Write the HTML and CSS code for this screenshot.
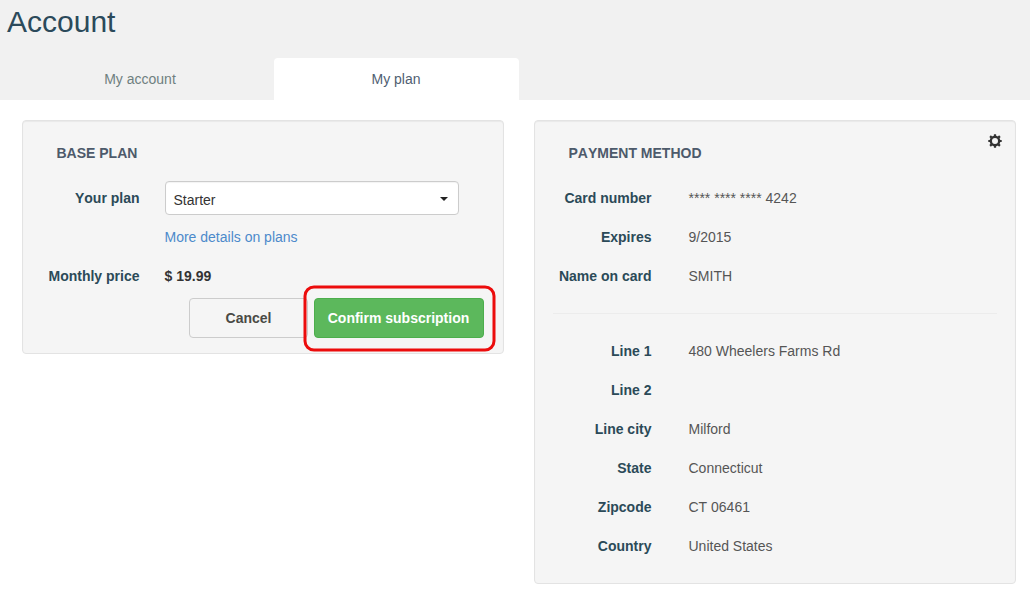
FILE: index.html
```html
<!DOCTYPE html>
<html lang="en">
<head>
<meta charset="utf-8">
<title>Account</title>
<link rel="stylesheet" href="styles.css">
</head>
<body>
<header class="header">
  <h1 class="title">Account</h1>
  <nav class="tabs">
    <a class="tab">My account</a>
    <a class="tab active">My plan</a>
  </nav>
</header>
<main class="content">
  <section class="panel plan">
    <h2 class="heading">BASE PLAN</h2>
    <div class="row"><span class="label">Your plan</span>
      <div class="select"><span>Starter</span><i class="caret"></i></div></div>
    <div class="row"><span class="label"></span><a class="link">More details on plans</a></div>
    <div class="row"><span class="label">Monthly price</span><b class="price">$ 19.99</b></div>
    <div class="actions">
      <button class="btn cancel">Cancel</button>
      <div class="confirm-wrap"><button class="btn confirm">Confirm subscription</button>
        <svg class="highlight" viewBox="0 0 193 67"><rect x="2" y="2" width="189" height="63" rx="9" fill="none" stroke="#ec0c0c" stroke-width="3"/></svg></div>
    </div>
  </section>
  <section class="panel payment">
    <svg class="gear" viewBox="-7 -7 14 14"><circle r="4.200" fill="none" stroke="#333" stroke-width="2.400"/><path d="M0-6.700V-4.500M0 6.700V4.500M-6.700 0H-4.500M6.700 0H4.500M-4.900-4.900l1.500 1.500M4.900 4.900 3.400 3.400M-4.900 4.900l1.500-1.500M4.900-4.900 3.400-3.400" stroke="#333" stroke-width="2.200"/></svg>
    <h2 class="heading">PAYMENT METHOD</h2>
    <div class="row"><span class="label">Card number</span><span class="value">**** **** **** 4242</span></div>
    <div class="row"><span class="label">Expires</span><span class="value">9/2015</span></div>
    <div class="row"><span class="label">Name on card</span><span class="value">SMITH</span></div>
    <hr class="divider">
    <div class="row"><span class="label">Line 1</span><span class="value">480 Wheelers Farms Rd</span></div>
    <div class="row"><span class="label">Line 2</span><span class="value"></span></div>
    <div class="row"><span class="label">Line city</span><span class="value">Milford</span></div>
    <div class="row"><span class="label">State</span><span class="value">Connecticut</span></div>
    <div class="row"><span class="label">Zipcode</span><span class="value">CT 06461</span></div>
    <div class="row"><span class="label">Country</span><span class="value">United States</span></div>
  </section>
</main>
</body>
</html>
```
FILE: styles.css
```css
* { box-sizing: border-box; }
body { margin: 0; height: 592px; overflow: hidden; background: #fff; color: #555; font: 14px/20px "Liberation Sans", Arial, sans-serif; font-kerning: none; }
.header { height: 100px; background: #f1f1f1; display: flex; flex-direction: column; justify-content: space-between; }
.title { margin: 0; padding: 5px 0 0 7px; font-size: 30px; line-height: 33px; font-weight: 400; color: #2b4a5b; }
.tabs { display: flex; padding-left: 7px; }
.tab { width: 267px; height: 42px; padding-right: 1px; line-height: 42px; text-align: center; color: #6f7f80; }
.tab.active { width: 245px; background: #fff; color: #4f6072; border-radius: 4px 4px 0 0; }
.content { display: flex; align-items: flex-start; gap: 30px; padding: 20px 0 0 22px; }
.panel { position: relative; width: 482px; background: #f5f5f5; border: 1px solid #e3e3e3; border-radius: 4px; padding: 22px 18px 0; box-shadow: inset 0 1px 1px rgba(0, 0, 0, .05); }
.plan { height: 234px; }
.payment { height: 464px; }
.heading { margin: 0 0 18px 15.5px; font-size: 14px; line-height: 20px; font-weight: 700; color: #4d5a6b; }
.row { display: flex; height: 39px; line-height: 34px; }
.label { flex: none; text-align: right; font-weight: 700; color: #2b4a58; }
.plan .label { width: 98.5px; margin-right: 25px; }
.payment .label { width: 98.5px; margin-right: 37px; }
.select { width: 294px; height: 34px; margin-left: .5px; padding: 0 10px 0 7.5px; display: flex; align-items: center; justify-content: space-between; background: #fff; border: 1px solid #ccc; border-radius: 4px; box-shadow: inset 0 1px 1px rgba(0, 0, 0, .05); color: #333; }
.select span { padding-top: 3px; }
.caret { margin-top: 2px; border: 4px solid transparent; border-top-color: #222; border-bottom: 0; }
.link { color: #4c8acb; }
.price { color: #333; }
.actions { display: flex; justify-content: flex-end; gap: 6px; padding-right: 1px; }
.btn { height: 40px; padding: 0; border-radius: 4px; font: 700 14px/20px "Liberation Sans", Arial, sans-serif; }
.cancel { width: 119px; color: #4a4a45; background: #f5f5f5; border: 1px solid #ccc; }
.confirm-wrap { position: relative; }
.confirm { width: 170px; display: block; padding-right: 1px; color: #fff; background: #5cb85c; border: 1px solid #4cae4c; }
.highlight { position: absolute; left: -11px; top: -13px; width: 193px; height: 67px; }
.divider { margin: 0; height: 36px; border: 0; background: linear-gradient(#ececec, #ececec) 0 15px / 100% 1px no-repeat; }
.gear { position: absolute; left: 452.5px; top: 13px; width: 14px; height: 14px; }
```
